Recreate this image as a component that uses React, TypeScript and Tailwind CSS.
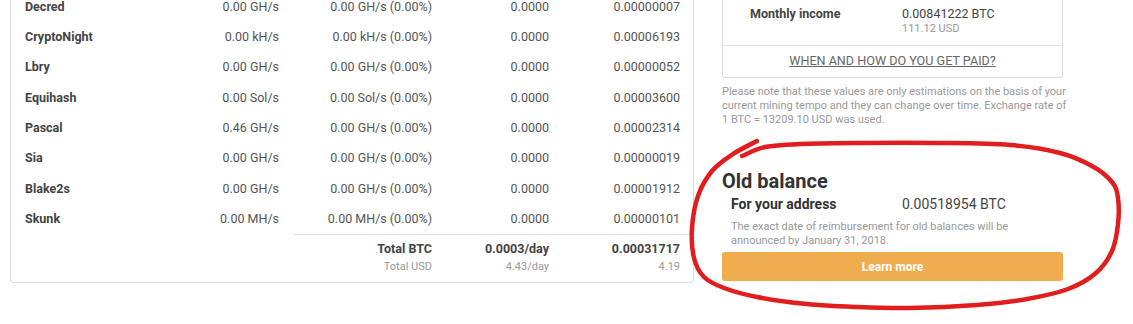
import React from "react";

const rows = [
  ["Decred", "0.00 GH/s", "0.00 GH/s (0.00%)", "0.0000", "0.00000007"],
  ["CryptoNight", "0.00 kH/s", "0.00 kH/s (0.00%)", "0.0000", "0.00006193"],
  ["Lbry", "0.00 GH/s", "0.00 GH/s (0.00%)", "0.0000", "0.00000052"],
  ["Equihash", "0.00 Sol/s", "0.00 Sol/s (0.00%)", "0.0000", "0.00003600"],
  ["Pascal", "0.46 GH/s", "0.00 GH/s (0.00%)", "0.0000", "0.00002314"],
  ["Sia", "0.00 GH/s", "0.00 GH/s (0.00%)", "0.0000", "0.00000019"],
  ["Blake2s", "0.00 GH/s", "0.00 GH/s (0.00%)", "0.0000", "0.00001912"],
  ["Skunk", "0.00 MH/s", "0.00 MH/s (0.00%)", "0.0000", "0.00000101"],
];

const pts: [number, number][] = [
  [757, 141], [733, 154], [712, 171], [698, 196], [692, 228], [694, 258],
  [704, 277], [724, 288], [757, 297], [807, 304], [857, 307], [910, 308],
  [977, 305], [1027, 299], [1068, 289], [1096, 273], [1112, 251], [1118, 224],
  [1118, 198], [1112, 182], [1092, 166], [1060, 153], [1010, 145], [940, 143],
  [860, 143], [800, 144], [765, 147], [742, 156],
];

function toPath(p: [number, number][]) {
  let d = `M${p[0][0]},${p[0][1]}`;
  for (let i = 0; i < p.length - 1; i++) {
    const p0 = p[i - 1] || p[i];
    const p1 = p[i];
    const p2 = p[i + 1];
    const p3 = p[i + 2] || p2;
    const c1x = p1[0] + (p2[0] - p0[0]) / 6;
    const c1y = p1[1] + (p2[1] - p0[1]) / 6;
    const c2x = p2[0] - (p3[0] - p1[0]) / 6;
    const c2y = p2[1] - (p3[1] - p1[1]) / 6;
    d += ` C${c1x.toFixed(1)},${c1y.toFixed(1)} ${c2x.toFixed(1)},${c2y.toFixed(1)} ${p2[0]},${p2[1]}`;
  }
  return d;
}

export default function App() {
  return (
    <div className="relative w-[1133px] h-[324px] overflow-hidden bg-white font-['Roboto',sans-serif]">
      <div className="flex items-start">
        {/* Left panel */}
        <div className="ml-[10px] w-[684px] -mt-[8px] border border-t-0 border-[#dddddd] rounded-b-[4px] pl-[14px]">
          {rows.map((r) => (
            <div key={r[0]} className="flex h-[30.3px] items-center text-[12.5px]">
              <div className="w-[154px] font-bold text-[#444]">{r[0]}</div>
              <div className="w-[114px] pr-[14px] text-right text-[#555]">{r[1]}</div>
              <div className="w-[153px] pr-[14px] text-right text-[#555]">{r[2]}</div>
              <div className="w-[117px] pr-[14px] text-right text-[#555]">{r[3]}</div>
              <div className="w-[130px] pr-[13px] text-right text-[#555]">{r[4]}</div>
            </div>
          ))}
          <div className="flex">
            <div className="w-[268px]" />
            <div className="flex flex-1 border-t border-[#e3e3e3] pt-[5px] pb-[6px]">
              <div className="w-[153px] pr-[14px] text-right">
                <div className="text-[12.5px] leading-[18px] font-bold text-[#444]">Total BTC</div>
                <div className="text-[11px] leading-[18px] text-[#9a9a9a]">Total USD</div>
              </div>
              <div className="w-[117px] pr-[14px] text-right">
                <div className="text-[12.5px] leading-[18px] font-bold text-[#444]">0.0003/day</div>
                <div className="text-[11px] leading-[18px] text-[#9a9a9a]">4.43/day</div>
              </div>
              <div className="w-[130px] pr-[13px] text-right">
                <div className="text-[12.5px] leading-[18px] font-bold text-[#444]">0.00031717</div>
                <div className="text-[11px] leading-[18px] text-[#9a9a9a]">4.19</div>
              </div>
            </div>
          </div>
        </div>

        {/* Right column */}
        <div className="ml-[28px] w-[341px]">
          <div className="border border-t-0 border-[#dddddd] rounded-b-[4px]">
            <div className="flex h-[46px] border-b border-[#e3e3e3] pt-[6px] pl-[27px]">
              <div className="w-[152px] text-[12.5px] leading-[16px] font-bold text-[#444]">Monthly income</div>
              <div>
                <div className="text-[12.5px] leading-[16px] text-[#444]">0.00841222 BTC</div>
                <div className="text-[11px] leading-[13px] text-[#999]">111.12 USD</div>
              </div>
            </div>
            <div className="flex h-[31px] items-center justify-center">
              <span className="text-[12.6px] text-[#666] underline">WHEN AND HOW DO YOU GET PAID?</span>
            </div>
          </div>
          <p className="mt-[7px] whitespace-nowrap text-[11px] leading-[14px] text-[#999]">
            Please note that these values are only estimations on the basis of your
            <br />
            current mining tempo and they can change over time. Exchange rate of
            <br />
            1 BTC = 13209.10 USD was used.
          </p>
          <h2 className="mt-[42px] text-[20px] leading-[24px] font-bold text-[#333]">Old balance</h2>
          <div className="mt-[1px] flex pl-[9px] text-[14px] leading-[20px]">
            <div className="w-[171px] font-bold text-[#333]">For your address</div>
            <div className="text-[#444]">0.00518954 BTC</div>
          </div>
          <p className="mt-[6px] whitespace-nowrap pl-[9px] text-[11px] leading-[14px] text-[#999]">
            The exact date of reimbursement for old balances will be
            <br />
            announced by January 31, 2018.
          </p>
          <div className="mt-[4px] flex h-[29px] items-center justify-center rounded-[3px] bg-[#f0ad4e] text-[12px] font-bold text-white">
            Learn more
          </div>
        </div>
      </div>

      <svg
        className="pointer-events-none absolute left-0 top-0"
        width="1133"
        height="324"
        viewBox="0 0 1133 324"
      >
        <path
          d={toPath(pts)}
          fill="none"
          stroke="#e11d1d"
          strokeWidth="4.5"
          strokeLinecap="round"
          strokeLinejoin="round"
        />
      </svg>
    </div>
  );
}
